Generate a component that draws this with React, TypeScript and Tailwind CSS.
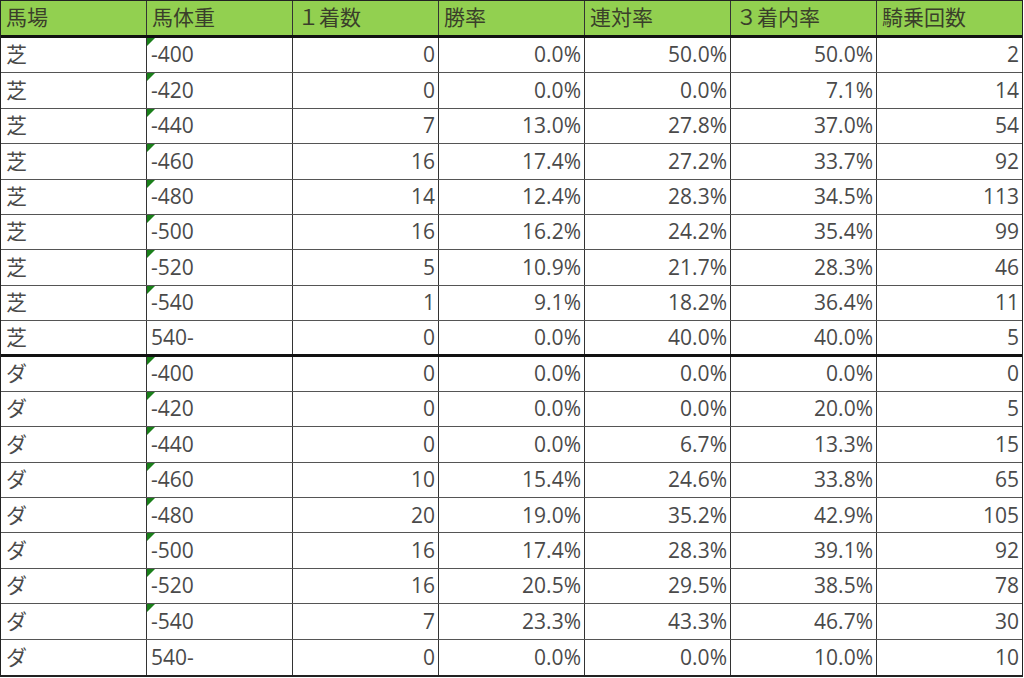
import React from "react";

type Row = [string, string, number, string, string, string, number];

const shiba: Row[] = [
  ["芝", "-400", 0, "0.0%", "50.0%", "50.0%", 2],
  ["芝", "-420", 0, "0.0%", "0.0%", "7.1%", 14],
  ["芝", "-440", 7, "13.0%", "27.8%", "37.0%", 54],
  ["芝", "-460", 16, "17.4%", "27.2%", "33.7%", 92],
  ["芝", "-480", 14, "12.4%", "28.3%", "34.5%", 113],
  ["芝", "-500", 16, "16.2%", "24.2%", "35.4%", 99],
  ["芝", "-520", 5, "10.9%", "21.7%", "28.3%", 46],
  ["芝", "-540", 1, "9.1%", "18.2%", "36.4%", 11],
  ["芝", "540-", 0, "0.0%", "40.0%", "40.0%", 5],
];

const dirt: Row[] = [
  ["ダ", "-400", 0, "0.0%", "0.0%", "0.0%", 0],
  ["ダ", "-420", 0, "0.0%", "0.0%", "20.0%", 5],
  ["ダ", "-440", 0, "0.0%", "6.7%", "13.3%", 15],
  ["ダ", "-460", 10, "15.4%", "24.6%", "33.8%", 65],
  ["ダ", "-480", 20, "19.0%", "35.2%", "42.9%", 105],
  ["ダ", "-500", 16, "17.4%", "28.3%", "39.1%", 92],
  ["ダ", "-520", 16, "20.5%", "29.5%", "38.5%", 78],
  ["ダ", "-540", 7, "23.3%", "43.3%", "46.7%", 30],
  ["ダ", "540-", 0, "0.0%", "0.0%", "10.0%", 10],
];

const headers = ["馬場", "馬体重", "１着数", "勝率", "連対率", "３着内率", "騎乗回数"];

function DataRow({ row, border }: { row: Row; border: string }) {
  const flag = row[1].startsWith("-");
  return (
    <div className={`flex h-[35.4px] ${border}`}>
      <div className="w-[146px] shrink-0 border-r border-[#333] pl-[5px] flex items-center">{row[0]}</div>
      <div className="relative w-[146px] shrink-0 border-r border-[#333] pl-[4px] flex items-center">
        {flag && (
          <span className="absolute left-0 top-0 w-0 h-0 border-t-[8px] border-t-[#1a7f1a] border-r-[8px] border-r-transparent" />
        )}
        {row[1]}
      </div>
      {[row[2], row[3], row[4], row[5]].map((v, i) => (
        <div key={i} className="w-[146px] shrink-0 border-r border-[#333] pr-[3px] flex items-center justify-end">
          {v}
        </div>
      ))}
      <div className="flex-1 pr-[3px] flex items-center justify-end">{row[6]}</div>
    </div>
  );
}

export default function App() {
  return (
    <div
      className="w-[1024px] h-[678px] bg-white text-[#4a4a4a] text-[21px] overflow-hidden"
      style={{ fontFamily: '"Open Sans", "Noto Sans CJK JP", sans-serif' }}
    >
      <div className="w-[1023px] border-l-[1.5px] border-r-[1.5px] border-t border-b-2 border-[#222]">
        <div className="flex h-[37px] bg-[#92d050] border-b-[3px] border-[#111] text-[#3a3f2a]">
          {headers.map((h, i) => (
            <div
              key={h}
              className={`${i < 6 ? "w-[146px] shrink-0 border-r border-[#333]" : "flex-1"} pl-[5px] flex items-center`}
            >
              {h}
            </div>
          ))}
        </div>
        {shiba.map((r, i) => (
          <DataRow
            key={"s" + i}
            row={r}
            border={i === shiba.length - 1 ? "border-b-[3px] border-[#111]" : "border-b border-[#555]"}
          />
        ))}
        {dirt.map((r, i) => (
          <DataRow key={"d" + i} row={r} border={i === dirt.length - 1 ? "" : "border-b border-[#555]"} />
        ))}
      </div>
    </div>
  );
}
